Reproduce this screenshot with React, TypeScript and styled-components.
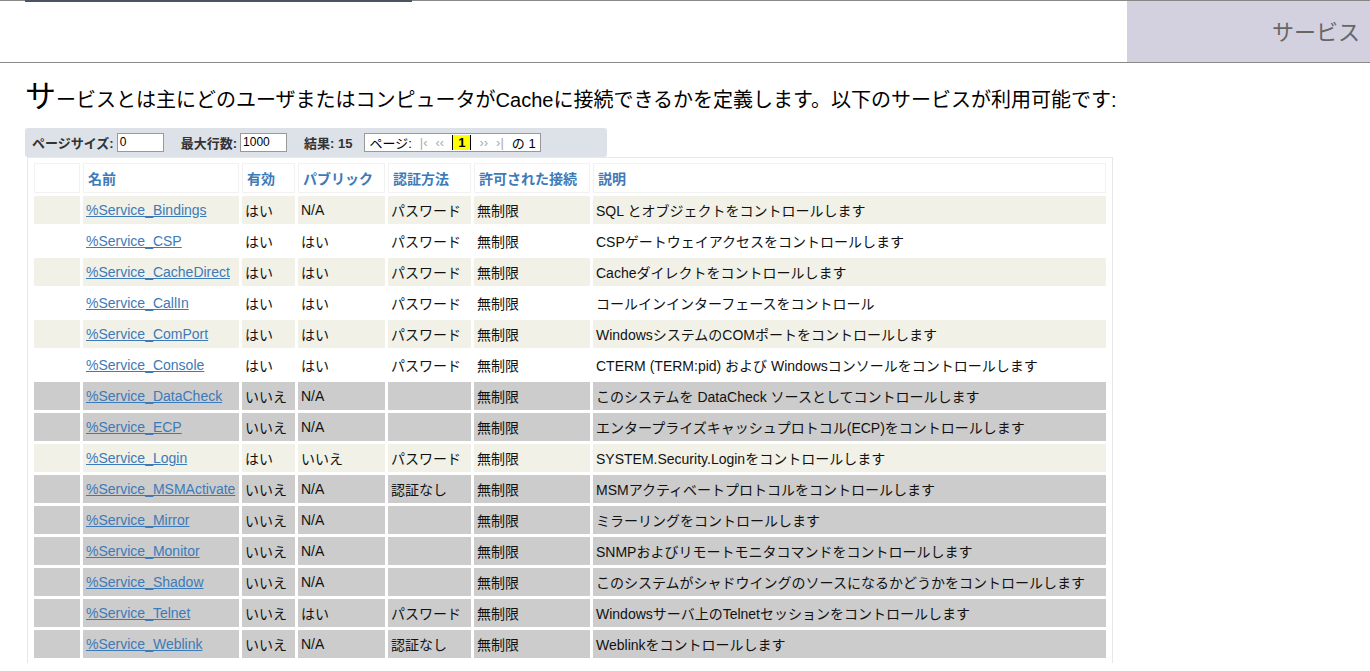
import React from "react";
import styled, { createGlobalStyle } from "styled-components";

const Global = createGlobalStyle`
  html, body { margin: 0; padding: 0; background: #fff; }
  body { font-family: Arial, "Liberation Sans", "Noto Sans CJK JP", sans-serif; color: #000; }
`;

const Header = styled.div`
  height: 61px;
  border-top: 1px solid #888;
  border-bottom: 1px solid #888;
  display: flex;
  position: relative;
`;
const TopBar = styled.div`
  position: absolute; left: 25px; top: -1px; width: 387px; height: 2px; background: #4a5563;
`;
const HeaderSpace = styled.div` flex: 1; `;
const HeaderTitle = styled.div`
  width: 243px;
  background: #d3d1e0;
  color: #666;
  font-size: 22px;
  display: flex; align-items: center; justify-content: flex-end;
  padding-right: 10px; box-sizing: border-box;
  padding-bottom: 4px;
`;
const Main = styled.div` padding: 16px 0 0 25px; `;
const Intro = styled.div`
  font-size: 20px; line-height: 36px; margin-bottom: 10px;
`;
const Big = styled.span` font-size: 31px; `;
const Toolbar = styled.div`
  width: 582px; height: 29px; box-sizing: border-box;
  background: #dde1e8; border-radius: 3px;
  display: flex; align-items: center; padding-left: 7px;
  font-size: 13px; font-weight: bold; color: #333;
`;
const Field = styled.span` display: flex; align-items: center; gap: 3px; margin-right: 17px; `;
const Input = styled.span<{ w: number }>`
  width: ${p => p.w}px; height: 19px; box-sizing: border-box;
  border: 1px solid #999; background: #fff; font-weight: normal; color: #000;
  font-size: 12px; line-height: 17px; padding-left: 2px;
`;
const Pager = styled.span`
  display: flex; align-items: center; height: 19px; box-sizing: border-box;
  border: 1px solid #999; background: #fff; font-weight: normal; color: #000;
  padding: 0 4px; gap: 8px; font-size: 13px; margin-left: -5px;
`;
const Nav = styled.span` color: #aaa; `;
const Cur = styled.span` background: #ff0; font-weight: bold; padding: 0 5px; border-left:1px solid #000;border-right:1px solid #000;`;
const TableWrap = styled.div`
  margin-left: 2px; width: 1086px; box-sizing: border-box;
  border: 1px solid #e8e8e8; border-bottom: none; padding: 2px 3px;
`;
const Table = styled.table`
  border-collapse: separate; border-spacing: 3px; width: 100%;
  font-size: 14px;
`;
const Th = styled.th<{ w?: number }>`
  text-align: left; color: #3d7ab8; font-weight: bold; height: 28px;
  border: 1px solid #f2f2f2; padding: 0 4px; white-space: nowrap;
  ${p => p.w ? `width:${p.w}px;` : ""}
`;
const Tr = styled.tr<{ kind: string }>`
  background: ${p => p.kind === "g" ? "#cccccc" : p.kind === "b" ? "#f1f1e8" : "#fff"};
`;
const Td = styled.td`
  height: 28px; padding: 0 3px; white-space: nowrap; color: #111;
`;
const Link = styled.a` color: #3d7ab8; text-decoration: underline; `;

const rows: [string, string, string, string, string, string, string][] = [
  ["b","%Service_Bindings","はい","N/A","パスワード","無制限","SQL とオブジェクトをコントロールします"],
  ["w","%Service_CSP","はい","はい","パスワード","無制限","CSPゲートウェイアクセスをコントロールします"],
  ["b","%Service_CacheDirect","はい","はい","パスワード","無制限","Cacheダイレクトをコントロールします"],
  ["w","%Service_CallIn","はい","はい","パスワード","無制限","コールインインターフェースをコントロール"],
  ["b","%Service_ComPort","はい","はい","パスワード","無制限","WindowsシステムのCOMポートをコントロールします"],
  ["w","%Service_Console","はい","はい","パスワード","無制限","CTERM (TERM:pid) および Windowsコンソールをコントロールします"],
  ["g","%Service_DataCheck","いいえ","N/A","","無制限","このシステムを DataCheck ソースとしてコントロールします"],
  ["g","%Service_ECP","いいえ","N/A","","無制限","エンタープライズキャッシュプロトコル(ECP)をコントロールします"],
  ["b","%Service_Login","はい","いいえ","パスワード","無制限","SYSTEM.Security.Loginをコントロールします"],
  ["g","%Service_MSMActivate","いいえ","N/A","認証なし","無制限","MSMアクティベートプロトコルをコントロールします"],
  ["g","%Service_Mirror","いいえ","N/A","","無制限","ミラーリングをコントロールします"],
  ["g","%Service_Monitor","いいえ","N/A","","無制限","SNMPおよびリモートモニタコマンドをコントロールします"],
  ["g","%Service_Shadow","いいえ","N/A","","無制限","このシステムがシャドウイングのソースになるかどうかをコントロールします"],
  ["g","%Service_Telnet","いいえ","はい","パスワード","無制限","Windowsサーバ上のTelnetセッションをコントロールします"],
  ["g","%Service_Weblink","いいえ","N/A","認証なし","無制限","Weblinkをコントロールします"],
];

export default function App() {
  return (
    <>
      <Global />
      <Header>
        <TopBar />
        <HeaderSpace />
        <HeaderTitle>サービス</HeaderTitle>
      </Header>
      <Main>
        <Intro><Big>サ</Big>ービスとは主にどのユーザまたはコンピュータがCacheに接続できるかを定義します。以下のサービスが利用可能です:</Intro>
        <Toolbar>
          <Field>ページサイズ:<Input w={47}>0</Input></Field>
          <Field>最大行数:<Input w={47}>1000</Input></Field>
          <Field>結果: 15</Field>
          <Pager>ページ: <Nav>|‹</Nav><Nav>‹‹</Nav><Cur>1</Cur><Nav>››</Nav><Nav>›|</Nav>の 1</Pager>
        </Toolbar>
        <TableWrap>
          <Table>
            <thead>
              <tr>
                <Th w={36}></Th><Th w={146}>名前</Th><Th w={43}>有効</Th><Th w={77}>パブリック</Th>
                <Th w={73}>認証方法</Th><Th w={106}>許可された接続</Th><Th>説明</Th>
              </tr>
            </thead>
            <tbody>
              {rows.map(r => (
                <Tr key={r[1]} kind={r[0]}>
                  <Td></Td>
                  <Td><Link href="#">{r[1]}</Link></Td>
                  <Td>{r[2]}</Td><Td>{r[3]}</Td><Td>{r[4]}</Td><Td>{r[5]}</Td><Td>{r[6]}</Td>
                </Tr>
              ))}
            </tbody>
          </Table>
        </TableWrap>
      </Main>
    </>
  );
}
